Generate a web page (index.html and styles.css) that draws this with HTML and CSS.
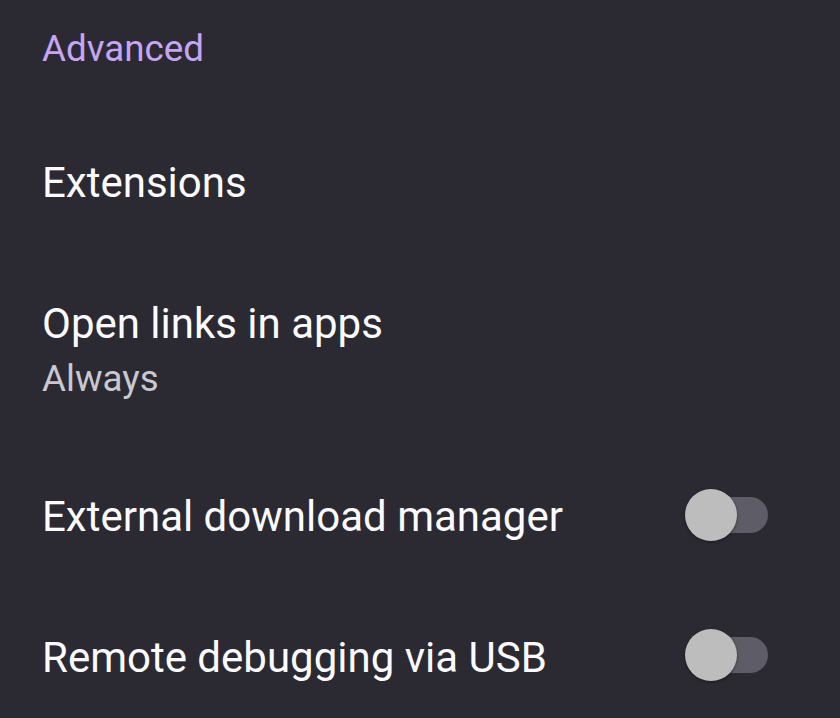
FILE: index.html
```html
<!DOCTYPE html>
<html>
<head>
<meta charset="utf-8">
<link rel="stylesheet" href="styles.css">
</head>
<body>
<div class="screen">
  <div class="category">Advanced</div>
  <div class="row">
    <div class="text"><div class="title">Extensions</div></div>
  </div>
  <div class="row">
    <div class="text">
      <div class="title">Open links in apps</div>
      <div class="summary">Always</div>
    </div>
  </div>
  <div class="row">
    <div class="text"><div class="title">External download manager</div></div>
    <div class="switch"><div class="track"></div><div class="thumb"></div></div>
  </div>
  <div class="row">
    <div class="text"><div class="title">Remote debugging via USB</div></div>
    <div class="switch"><div class="track"></div><div class="thumb"></div></div>
  </div>
</div>
</body>
</html>
```

FILE: styles.css
```css
html, body {
  margin: 0;
  padding: 0;
  background: #2b2a33;
  font-family: Roboto, "Noto Sans", sans-serif;
}
.screen {
  width: 840px;
  height: 718px;
  overflow: hidden;
  display: flex;
  flex-direction: column;
}
.category {
  padding: 25px 42px 0;
  height: 48px;
  line-height: 48px;
  font-size: 36.75px;
  color: #c7a5f5;
  margin-bottom: 40px;
  flex-shrink: 0;
}
.row {
  display: flex;
  align-items: center;
  padding: 42px 72px 42.5px 42px;
  min-height: 56px;
  flex-shrink: 0;
}
.text {
  flex: 1;
}
.title {
  font-size: 42px;
  line-height: 56px;
  color: #fbfbfe;
}
.summary {
  font-size: 36.75px;
  line-height: 53px;
  color: #c9c8d0;
}
.switch {
  position: relative;
  width: 83px;
  height: 52px;
  margin-top: -5px;
}
.track {
  position: absolute;
  right: 0;
  top: 8px;
  width: 74px;
  height: 36px;
  border-radius: 18px;
  background: #5e5d67;
}
.thumb {
  position: absolute;
  left: 0;
  top: 0;
  width: 52px;
  height: 52px;
  border-radius: 50%;
  background: #bdbdbd;
  box-shadow: 0 1px 3px rgba(0,0,0,0.45);
}
```
